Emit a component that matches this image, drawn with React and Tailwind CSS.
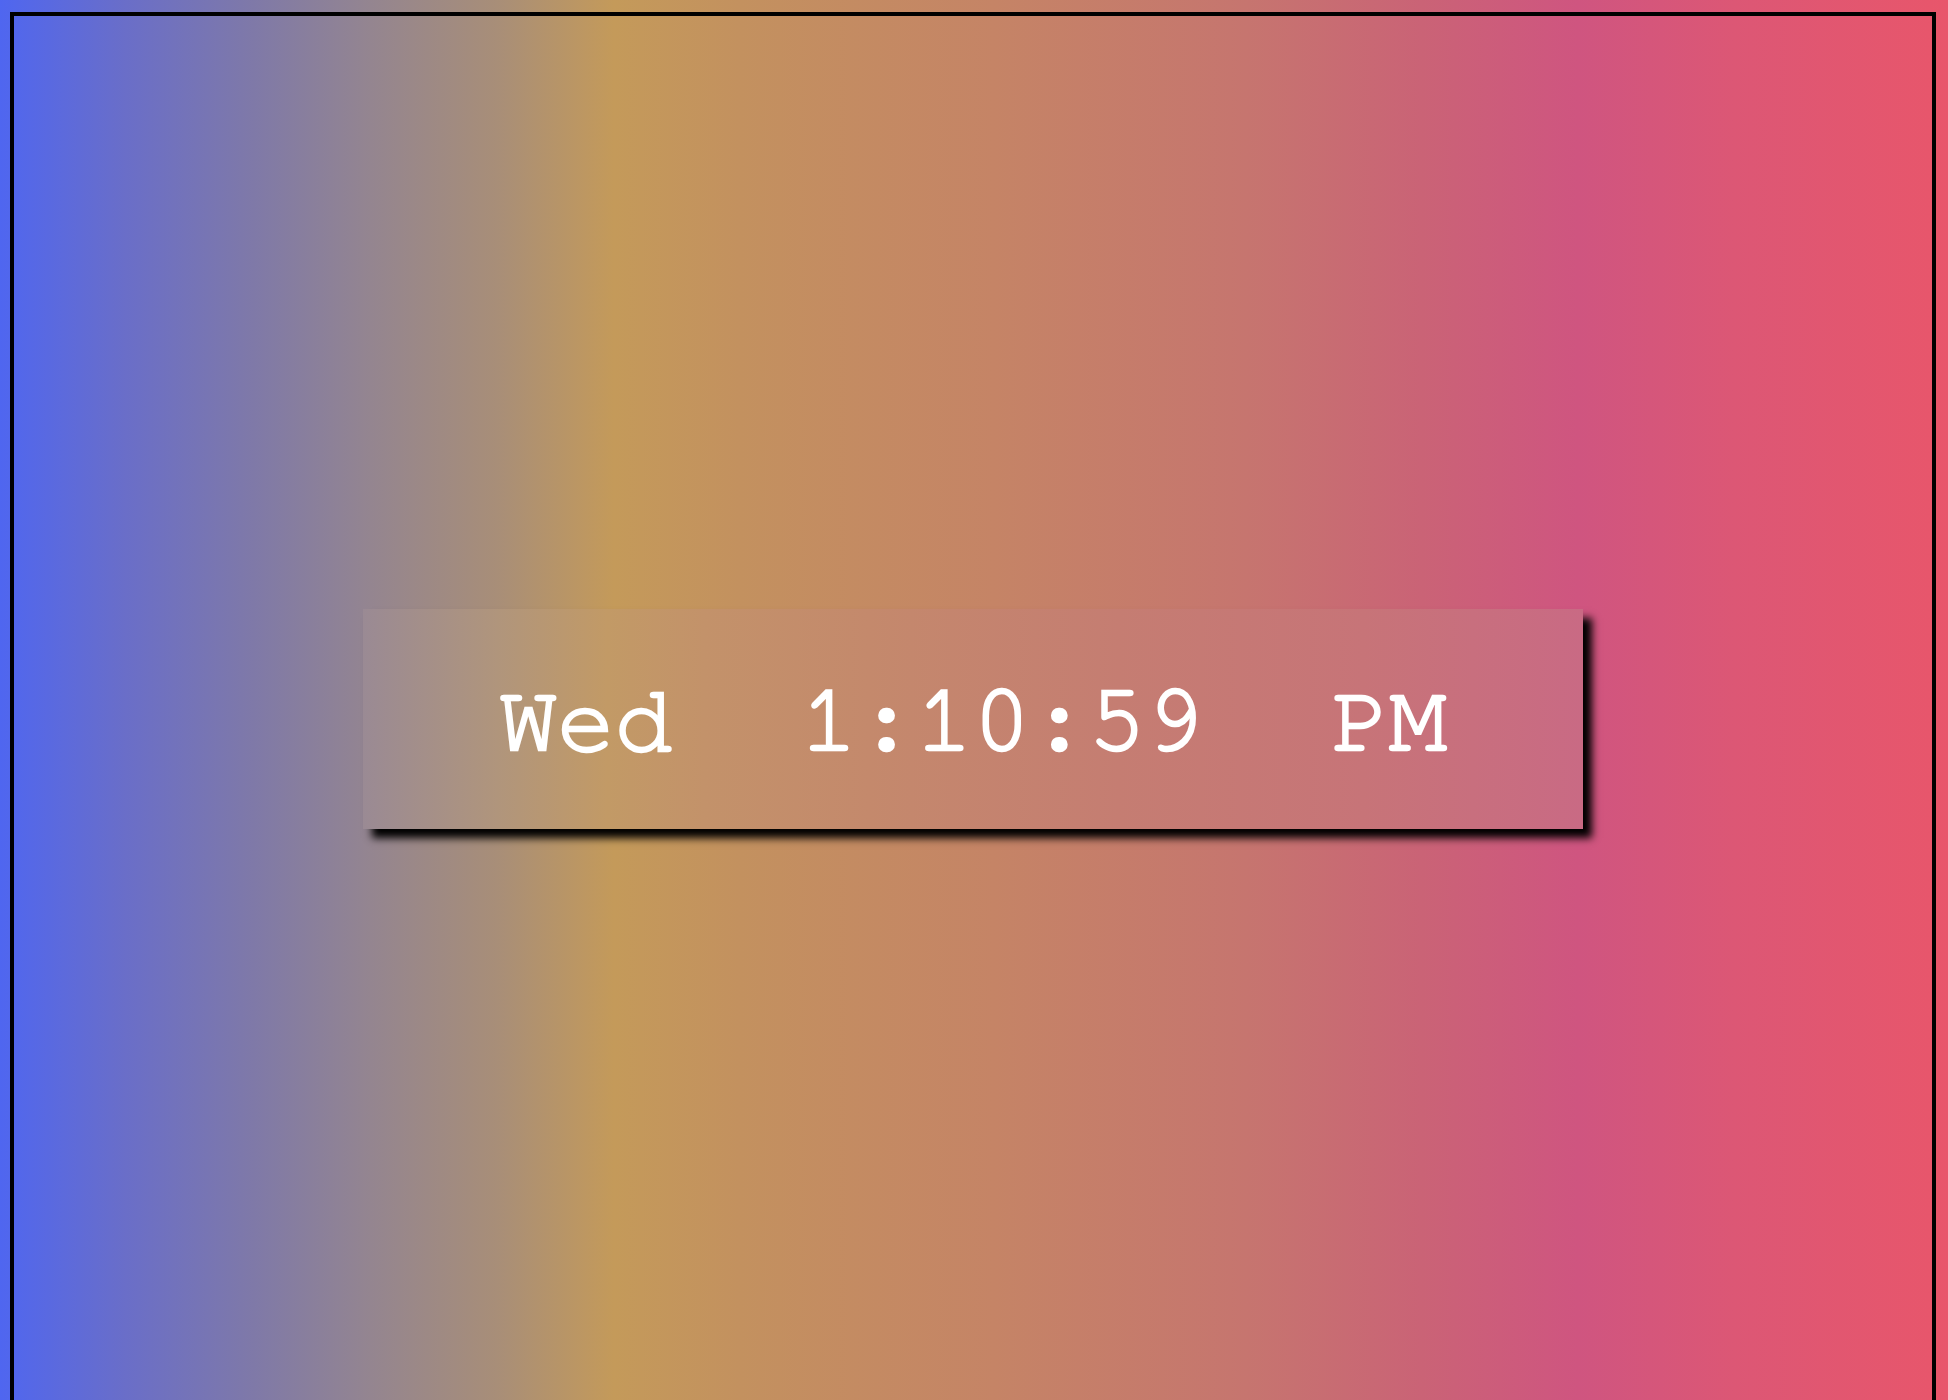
export default function App() {
  return (
    <div className="h-[1400px] w-full overflow-hidden bg-[linear-gradient(to_right,#4f66f0_0%,#6a6ec8_6.5%,#7f79a8_13%,#948590_19%,#a88e78_25.5%,#c49a5a_31.5%,#c3915f_38%,#c58466_51%,#c6756f_64%,#ca6376_73%,#cf5580_81%,#dc5775_89%,#e8566b_100%)] pt-[12px] pl-[10px] pr-[12px]">
      <div className="flex h-[1414px] items-center justify-center border-4 border-black">
        <div
          className="flex h-[220px] w-[1220px] items-start justify-center gap-[128px] bg-[linear-gradient(to_right,#9a8a94_0%,#b0957c_11%,#c29a66_20%,#c3926a_28%,#c4896c_41.5%,#c57d72_62%,#c77478_82%,#c96a84_100%)] pt-[64px] text-[96px] leading-[96px] font-normal text-white shadow-[9px_9px_8px_#000] [-webkit-text-stroke:2.5px_white] [paint-order:stroke_fill]"
          style={{ fontFamily: '"Nimbus Mono PS", "Nimbus Mono L", FreeMono, "Liberation Mono", "Courier New", monospace' }}
        >
          <span>Wed</span>
          <span>1:10:59</span>
          <span>PM</span>
        </div>
      </div>
    </div>
  );
}
